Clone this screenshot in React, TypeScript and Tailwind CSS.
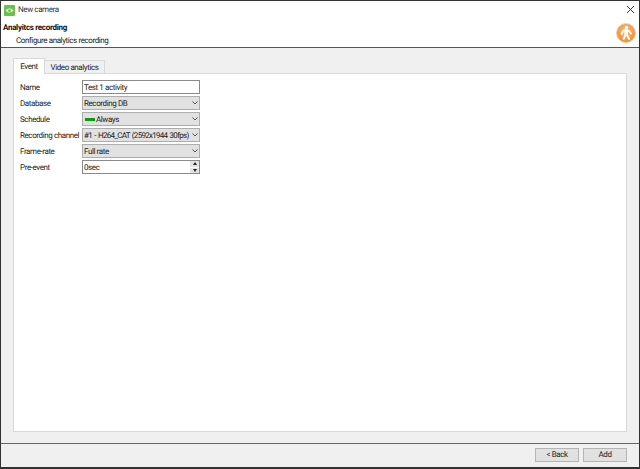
const font = "[font-family:'Roboto',sans-serif] [text-rendering:geometricPrecision] tracking-[-0.4px]";

function Chevron() {
  return (
    <svg width="6" height="4" viewBox="0 0 6 4" className="shrink-0" fill="none" stroke="#555" strokeWidth="1">
      <path d="M0.5 0.5 L3 3 L5.5 0.5" />
    </svg>
  );
}

function Row({ label, children }: { label: string; children: React.ReactNode }) {
  return (
    <div className="flex items-center h-[14px]">
      <div className="w-[62px] shrink-0 pt-[1px] text-[8px] text-[#222] whitespace-nowrap">{label}</div>
      <div className="w-[118px] h-[14px]">{children}</div>
    </div>
  );
}

function Select({ children }: { children: React.ReactNode }) {
  return (
    <div className="h-full flex items-center justify-between pl-[1px] pr-[1px] bg-[#e1e1e1] border border-[#adadad] text-[8px] text-[#222] whitespace-nowrap overflow-hidden">
      <div className="flex items-center gap-[1px] pt-[1px]">{children}</div>
      <Chevron />
    </div>
  );
}

function Walker() {
  return (
    <svg width="20" height="20" viewBox="0 0 20 20">
      <defs>
        <radialGradient id="orb" cx="50%" cy="40%" r="60%">
          <stop offset="0%" stopColor="#fcc07c" />
          <stop offset="100%" stopColor="#f08a2c" />
        </radialGradient>
      </defs>
      <circle cx="10" cy="10" r="9.5" fill="url(#orb)" stroke="#eed3b6" strokeWidth="1" />
      <circle cx="10.5" cy="4.6" r="1.8" fill="#fff" />
      <path d="M7 8 L10 6.8 L13 8 L15 10.5 M7 8 L5.6 11 M9.2 7.5 L9.4 12 L7.6 16 M11 7.5 L11 12 L13.2 16" fill="none" stroke="#fff" strokeWidth="1.9" strokeLinecap="round" />
    </svg>
  );
}

export default function App() {
  return (
    <div className={`w-[640px] h-[469px] flex flex-col bg-[#f0f0f0] border border-[#333] border-b-2 ${font}`}>
      <div className="bg-white h-[46px] shrink-0 flex flex-col relative">
        <div className="h-[19px] flex items-center pl-[3px] gap-[3px]">
          <svg width="11" height="11" viewBox="0 0 11 11">
            <rect width="11" height="11" rx="1" fill="#6cc04a" />
            <path d="M1.5 5.5 Q5.5 1.5 9.5 5.5 Q5.5 9.5 1.5 5.5 Z" fill="#fff" />
            <circle cx="5.5" cy="5.5" r="1.5" fill="#6cc04a" />
          </svg>
          <span className="text-[8px] text-[#333]">New camera</span>
        </div>
        <div className="pl-[2px] mt-[3px] text-[8px] leading-[12px] font-bold tracking-[-0.3px] text-[#111]">Analyitcs recording</div>
        <div className="pl-[15px] text-[8px] leading-[13px] text-[#222]">Configure analytics recording</div>
        <svg width="9" height="9" viewBox="0 0 9 9" className="absolute right-[4px] top-[4px]" fill="none" stroke="#333" strokeWidth="1">
          <path d="M1 1 L8 8 M8 1 L1 8" />
        </svg>
        <div className="absolute right-[3px] top-[22px]">
          <Walker />
        </div>
      </div>
      <div className="h-[1px] bg-[#555] shrink-0" />
      <div className="flex-1 flex flex-col px-[12px] pt-[10px] pb-[11px] min-h-0">
        <div className="flex items-end h-[16px] shrink-0">
          <div className="relative z-10 h-[16px] w-[32px] bg-white border border-b-0 border-[#d9d9d9] flex items-center justify-center text-[8px] text-[#222]">Event</div>
          <div className="h-[14px] w-[60px] bg-[#f0f0f0] border border-l-0 border-b-0 border-[#d9d9d9] flex items-center justify-center text-[8px] text-[#222] whitespace-nowrap">Video analytics</div>
        </div>
        <div className="flex-1 bg-white border border-[#d9d9d9] -mt-[1px] pl-[6px] pt-[6px] flex flex-col gap-[2px]">
          <Row label="Name">
            <div className="h-full flex items-center pl-[1px] pt-[1px] bg-white border border-[#8a8a8a] text-[8px] text-[#222]">Test 1 activity</div>
          </Row>
          <Row label="Database"><Select>Recording DB</Select></Row>
          <Row label="Schedule">
            <Select>
              <span className="w-[10px] h-[3px] bg-[#0f9b0f] ml-[1px]" />
              Always
            </Select>
          </Row>
          <Row label="Recording channel"><Select><span className="tracking-[-0.72px] [word-spacing:1px]">#1 - H264_CAT (2592x1944 30fps)</span></Select></Row>
          <Row label="Frame-rate"><Select>Full rate</Select></Row>
          <Row label="Pre-event">
            <div className="h-full flex items-center justify-between pl-[1px] bg-white border border-[#8a8a8a] text-[8px] text-[#222]">
              <span className="pt-[1px]">0sec</span>
              <div className="w-[9px] h-full flex flex-col gap-[1px] bg-white">
                <div className="flex-1 bg-[#e3e3e3] flex items-center justify-center">
                  <div className="w-0 h-0 border-x-[2px] border-x-transparent border-b-[3px] border-b-[#222]" />
                </div>
                <div className="flex-1 bg-[#e3e3e3] flex items-center justify-center">
                  <div className="w-0 h-0 border-x-[2px] border-x-transparent border-t-[3px] border-t-[#222]" />
                </div>
              </div>
            </div>
          </Row>
        </div>
      </div>
      <div className="h-[1px] bg-[#666] shrink-0" />
      <div className="h-[23px] shrink-0 flex items-center justify-end gap-[4px] pr-[12px] pb-[2px]">
        <div className="w-[44px] h-[14px] bg-[#e1e1e1] border border-[#b5b5b5] flex items-center justify-center text-[8px] text-[#222]">&lt; Back</div>
        <div className="w-[44px] h-[14px] bg-[#e1e1e1] border border-[#b5b5b5] flex items-center justify-center text-[8px] text-[#222]">Add</div>
      </div>
    </div>
  );
}
